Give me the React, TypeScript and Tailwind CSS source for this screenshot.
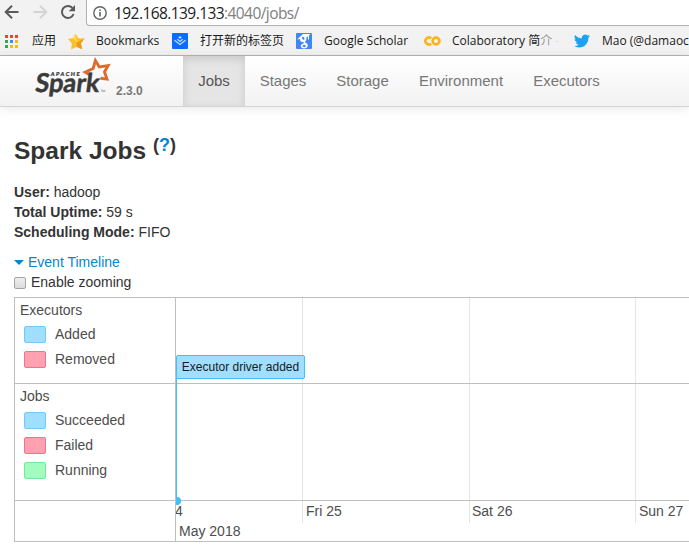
import React from 'react';

const appColors = ['#ea4335', '#ea4335', '#ea4335', '#34a853', '#4285f4', '#fbbc05', '#34a853', '#fbbc05', '#fbbc05'];

function BackIcon() {
  return (
    <svg width="16" height="16" viewBox="0 0 16 16" fill="none" stroke="#5a5a5a" strokeWidth="2">
      <path d="M14.5 8H2M8 1.7 1.7 8 8 14.3" />
    </svg>
  );
}

function ForwardIcon() {
  return (
    <svg width="16" height="16" viewBox="0 0 16 16" fill="none" stroke="#d3d3d3" strokeWidth="2">
      <path d="M1.5 8H14M8 1.7 14.3 8 8 14.3" />
    </svg>
  );
}

function ReloadIcon() {
  return (
    <svg width="16" height="16" viewBox="0 0 16 16">
      <path d="M13.6 10A6 6 0 1 1 12.4 3.9" fill="none" stroke="#5a5a5a" strokeWidth="2" />
      <path d="M15 1v6.3H8.700z" fill="#5a5a5a" />
    </svg>
  );
}

function InfoIcon() {
  return (
    <svg width="14" height="14" viewBox="0 0 14 14">
      <circle cx="7" cy="7" r="6.200" fill="none" stroke="#5f6368" strokeWidth="1.400" />
      <path d="M6.200 6.100h1.600v4.400H6.200zM6.200 3.400h1.600V5H6.200z" fill="#5f6368" />
    </svg>
  );
}

function AppsIcon() {
  return (
    <svg width="13" height="13" viewBox="0 0 13 13">
      {appColors.map((c, i) => (
        <rect key={i} x={(i % 3) * 5} y={Math.floor(i / 3) * 5} width="3" height="3" fill={c} />
      ))}
    </svg>
  );
}

function StarIcon() {
  return (
    <svg width="17" height="17" viewBox="0 0 17 17">
      <path d="m7.500.5 2.900 4.700 6.200.3-3.700 4.700 1.300 6-5.700-2.500-5.300 2.800.6-6.100L0 6l5.500-.9z" fill="#fbc02d" />
      <path d="m16.600 5.500-3.700 4.700 1.300 6-5.700-2.500.4-4.200z" fill="#ef9a1a" />
      <path d="m7.500.5 1.400 9L5 5.100z" fill="#ffdc45" />
    </svg>
  );
}

function NewTabIcon() {
  return (
    <svg width="16" height="16" viewBox="0 0 16 16">
      <rect width="16" height="16" rx="1" fill="#0b6cff" />
      <path d="m2.500 7.200 5.500 4.300 5.500-4.300M5.300 6.300 8 8.400l2.700-2.100" fill="none" stroke="#b9dcff" strokeWidth="1.300" />
      <path d="m8 3 1.700 1.400L8 5.800 6.300 4.400z" fill="#d9ecff" />
    </svg>
  );
}

function ScholarIcon() {
  return (
    <svg width="16" height="16" viewBox="0 0 16 16">
      <rect width="16" height="16" rx="1" fill="#4285f4" />
      <path d="M1 6.500 7 1h7.500L13 2.400v4.200h-1V3.400l-1.800 1.400c.8 2.200-.3 3.200-1.300 4 .2.900 2.900 1.500 2.900 3.800 0 1.600-1.300 2.700-3.300 2.900-2.300.1-3.700-1-3.700-2.300 0-1.700 1.500-2.500 3-2.700-.4-.5-.4-.9-.2-1.400C5.200 9.200 3.600 8 3.900 6z" fill="#fff" />
      <path d="M6 4.800c0-1.400 1.900-1.500 2.500.6.400 1.700-2.100 2.200-2.500-.6zM6.400 13c0-1.300 3.100-1.300 3.500.1 0 1.500-3.300 1.400-3.500-.1z" fill="#4285f4" />
    </svg>
  );
}

function ColabIcon() {
  return (
    <svg width="17" height="12" viewBox="0 0 17 12" fill="none" stroke="#fcb316" strokeWidth="2.600">
      <path d="M7.200 8.700A3.500 3.500 0 1 1 7.200 3.300" />
      <circle cx="12" cy="6" r="3.400" />
    </svg>
  );
}

function TwitterIcon() {
  return (
    <svg width="16" height="16" viewBox="0 0 24 24" fill="#1da1f2">
      <path d="M23.950 4.570a10 10 0 0 1-2.820.770 4.960 4.960 0 0 0 2.160-2.720c-.950.550-2 .960-3.130 1.180a4.920 4.920 0 0 0-8.380 4.480C7.690 8.090 4.070 6.130 1.640 3.160a4.930 4.930 0 0 0 1.520 6.570 4.900 4.900 0 0 1-2.230-.610v.060c0 2.380 1.700 4.370 3.950 4.820a5 5 0 0 1-2.210.090 4.940 4.940 0 0 0 4.600 3.420A9.870 9.870 0 0 1 0 19.540a13.990 13.990 0 0 0 7.560 2.210c9.050 0 14-7.500 14-13.980 0-.210 0-.420-.020-.630a9.940 9.940 0 0 0 2.460-2.550z" />
    </svg>
  );
}

function SparkLogo() {
  return (
    <svg width="78" height="42" viewBox="0 0 78 42" className="shrink-0">
      <path d="m55.500 18.800-4.300-2.600 8-3.700 2.200-8 3.900 6.400 8.800-1.300-3.600 6.300 2.500 7.200-6.500-.9" fill="none" stroke="#dd6b2b" strokeWidth="2.900" />
      <g transform="translate(0.500 35.500) skewX(-7)" fill="#3a3a3a" fontFamily="Lato, 'Open Sans', sans-serif">
        <text x="0" y="0" fontSize="26" fontWeight="700" textLength="64" lengthAdjust="spacingAndGlyphs" stroke="#3a3a3a" strokeWidth="0.500">Spark</text>
        <text x="14" y="-15.800" fontSize="5.500" fontWeight="900" textLength="29" stroke="#3a3a3a" strokeWidth="0.200">APACHE</text>
        <text x="66" y="0" fontSize="3">TM</text>
      </g>
    </svg>
  );
}

const tabs = [
  { label: 'Jobs', width: 'w-[62px]', active: true },
  { label: 'Stages', width: 'w-[76px]' },
  { label: 'Storage', width: 'w-[83px]' },
  { label: 'Environment', width: 'w-[114px]' },
  { label: 'Executors', width: 'w-[97px]' },
];

function Bookmark({ icon, iconClass, textClass, children }: { icon: React.ReactNode; iconClass: string; textClass: string; children: React.ReactNode }) {
  return (
    <div className="flex h-full shrink-0 items-center">
      <span className={`flex shrink-0 ${iconClass}`}>{icon}</span>
      <span className={`shrink-0 whitespace-nowrap ${textClass}`}>{children}</span>
    </div>
  );
}

function Browser() {
  return (
    <div className="h-14 overflow-hidden border-b border-[#b5b5b5] bg-[#f2f2f2] font-['Open_Sans','Noto_Sans_CJK_SC',sans-serif]">
      <div className="flex h-[26px]">
        <div className="flex w-[86px] shrink-0 items-start gap-3 pt-1 pl-1">
          <BackIcon />
          <ForwardIcon />
          <ReloadIcon />
        </div>
        <div className="flex flex-1 items-center rounded-bl-sm border-b border-l border-[#b0b0b0] bg-white pl-[6px]">
          <InfoIcon />
          <span className="ml-[7px] w-[186px] text-[15.500px] leading-6 tracking-[-0.570px] whitespace-nowrap text-[#222]">
            192.168.139.133<span className="text-[#808080]">:4040/jobs/</span>
          </span>
        </div>
      </div>
      <div className="flex h-[29px] items-center overflow-hidden pt-px text-[12px] text-[#1a1a1a]">
        <Bookmark icon={<AppsIcon />} iconClass="ml-[5px] w-[27px]" textClass="w-[36px]">应用</Bookmark>
        <Bookmark icon={<StarIcon />} iconClass="w-[28px]" textClass="w-[76px]">Bookmarks</Bookmark>
        <Bookmark icon={<NewTabIcon />} iconClass="w-[28px]" textClass="w-[96px]">打开新的标签页</Bookmark>
        <Bookmark icon={<ScholarIcon />} iconClass="w-[28px]" textClass="w-[100px]">Google Scholar</Bookmark>
        <Bookmark icon={<ColabIcon />} iconClass="w-[28px]" textClass="w-[122px]">
          Colaboratory 简<span className="text-[#999]">介</span> <span className="text-[#ddd]">-</span>
        </Bookmark>
        <Bookmark icon={<TwitterIcon />} iconClass="w-[28px]" textClass="w-[100px]">Mao (@damaoc</Bookmark>
      </div>
    </div>
  );
}

function Navbar() {
  return (
    <nav className="flex h-[51px] border-b border-[#d4d4d4] bg-linear-to-b from-white to-[#f2f2f2] shadow-[0_1px_10px_rgba(0,0,0,0.1)]">
      <div className="flex w-[183px] shrink-0 pl-[34px]">
        <SparkLogo />
        <span className="mt-[27px] ml-[4px] text-[12px] leading-4 font-bold text-[#777]">2.3.0</span>
      </div>
      {tabs.map((t) => (
        <a
          key={t.label}
          className={`flex shrink-0 items-center justify-center text-[15px] ${t.width} ${
            t.active ? 'bg-[#e5e5e5] text-[#555] shadow-[inset_0_3px_8px_rgba(0,0,0,0.125)]' : 'text-[#777]'
          }`}
        >
          {t.label}
        </a>
      ))}
    </nav>
  );
}

function Legend({ title, items }: { title: string; items: { label: string; color: string }[] }) {
  return (
    <div className="pt-[2px] pl-[5px] text-[#4d4d4d]">
      <div className="h-[22px] leading-5">{title}</div>
      {items.map((item) => (
        <div key={item.label} className="flex h-[25px] items-start pl-1">
          <span className={`mt-1 h-[17px] w-[22px] rounded-[2px] border-[1.500px] ${item.color}`} />
          <span className="mt-[2px] ml-[9px] leading-5">{item.label}</span>
        </div>
      ))}
    </div>
  );
}

const blue = 'border-[#70cbfc] bg-[#a0dfff]';
const red = 'border-[#f8708d] bg-[#ffa1b0]';
const green = 'border-[#6fed96] bg-[#a2fcc0]';

function Timeline() {
  return (
    <div className="mt-[5px] flex h-[245px] border-y border-l border-[#bfbfbf]">
      <div className="flex w-[160px] shrink-0 flex-col">
        <div className="h-[86px] border-b border-[#bfbfbf]">
          <Legend title="Executors" items={[{ label: 'Added', color: blue }, { label: 'Removed', color: red }]} />
        </div>
        <div className="h-[117px] border-b border-[#bfbfbf]">
          <Legend title="Jobs" items={[{ label: 'Succeeded', color: blue }, { label: 'Failed', color: red }, { label: 'Running', color: green }]} />
        </div>
      </div>
      <div className="relative flex-1 overflow-hidden border-l border-[#bfbfbf] text-[#4d4d4d]">
        <div className="grid h-[225px] grid-cols-[126px_167px_166px_1fr] items-stretch">
          <div className="flex items-end leading-6"><span className="-ml-px">4</span></div>
          <div className="flex items-end border-l border-[#e5e5e5] pl-[3px] leading-6">Fri 25</div>
          <div className="flex items-end border-l border-[#e5e5e5] pl-[2px] leading-6">Sat 26</div>
          <div className="flex items-end border-l border-[#e5e5e5] pl-[3px] leading-6 whitespace-nowrap">Sun 27</div>
        </div>
        <div className="pl-[3px] leading-[17px]">May 2018</div>
        <div className="absolute top-[85px] right-0 left-0 h-px bg-[#bfbfbf]" />
        <div className="absolute top-[202px] right-0 left-0 h-px bg-[#bfbfbf]" />
        <div className="absolute top-[80px] left-0 h-[123px] w-px bg-[#40bfff]" />
        <div className="absolute top-[199px] -left-[3px] size-2 rounded-full bg-[#40bfff]" />
        <div className="absolute top-[57px] left-0 flex h-6 w-[129px] items-center justify-center rounded-[2px] border border-[#40bfff] bg-[#a0dfff] text-[12px] whitespace-nowrap text-[#1a1a1a]">
          Executor driver added
        </div>
      </div>
    </div>
  );
}

export default function App() {
  return (
    <div className="h-[553px] w-[689px] overflow-hidden bg-white font-['Liberation_Sans',Arial,sans-serif] text-[14px] leading-5 text-[#333]">
      <Browser />
      <Navbar />
      <main className="pt-[24px] pl-[14px]">
        <h3 className="flex h-10 items-center text-[24.500px] leading-10 font-bold">
          Spark Jobs
          <span className="ml-[7px] -translate-y-[6px] text-[18px]">(<a className="text-[#0088cc]">?</a>)</span>
        </h3>
        <ul className="mt-[11px]">
          <li><strong>User:</strong> hadoop</li>
          <li><strong>Total Uptime:</strong> 59 s</li>
          <li><strong>Scheduling Mode:</strong> FIFO</li>
        </ul>
        <div className="mt-[10px] flex items-center text-[#0088cc]">
          <svg width="10" height="5" viewBox="0 0 10 5" className="mr-[4px]"><path d="M0 0h10L5 5z" fill="#0088cc" /></svg>
          Event Timeline
        </div>
        <label className="flex items-center">
          <span className="mt-[2px] mr-[5px] size-3 rounded-[2px] border border-[#a5a5a5] bg-linear-to-b from-[#eee] to-[#dcdcdc]" />
          Enable zooming
        </label>
        <Timeline />
      </main>
    </div>
  );
}
